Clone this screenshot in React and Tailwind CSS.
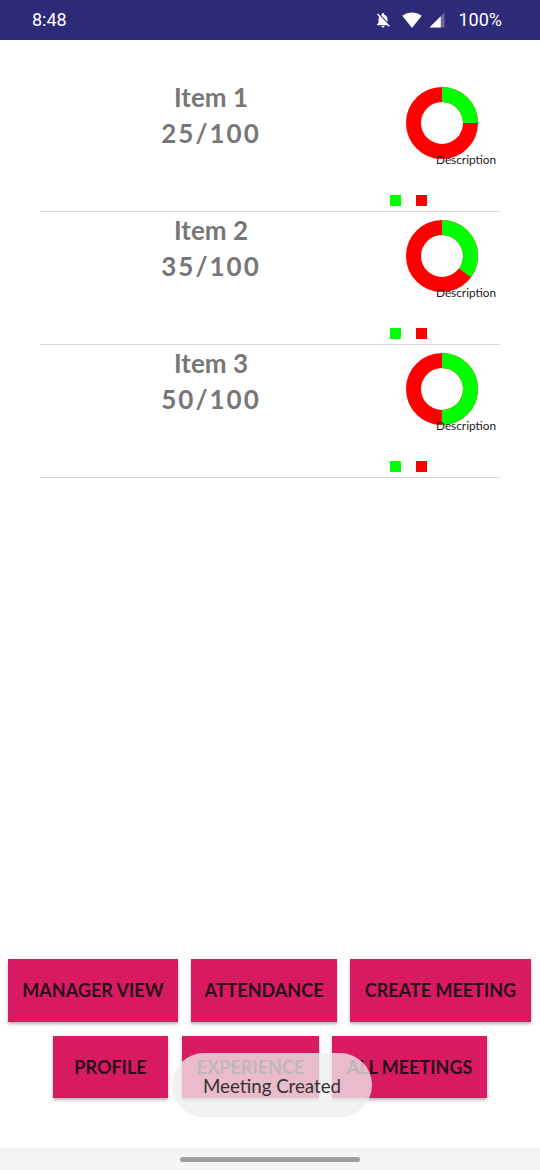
import React from 'react';

const items = [
  { name: 'Item 1', score: 25 },
  { name: 'Item 2', score: 35 },
  { name: 'Item 3', score: 50 },
];

const Donut = ({ pct }) => {
  const c = 2 * Math.PI * 28.5;
  return (
    <svg width="72" height="72" viewBox="0 0 72 72">
      <circle cx="36" cy="36" r="28.5" fill="none" stroke="#ff0000" strokeWidth="15" />
      <circle
        cx="36"
        cy="36"
        r="28.5"
        fill="none"
        stroke="#00ff00"
        strokeWidth="15"
        strokeDasharray={`${(pct / 100) * c} ${c}`}
        transform="rotate(-90 36 36)"
      />
    </svg>
  );
};

const StatusBar = () => (
  <div className="h-[40px] bg-[#2d2a78] flex items-center text-white font-['Roboto',sans-serif] shrink-0">
    <span className="ml-[32px] text-[18px] leading-none">8:48</span>
    <div className="ml-auto flex items-center mr-[38px]">
      <svg width="18" height="18" viewBox="0 0 24 24" fill="white" className="mr-[8px]">
        <path d="M20 18.69L7.84 6.14 5.27 3.49 4 4.76l2.8 2.8v.01c-.52.99-.8 2.16-.8 3.420v5l-2 2v1h13.73l2 2L21 19.72l-1-1.03zM12 22c1.11 0 2-.89 2-2h-4c0 1.11.89 2 2 2zm6-7.32V11c0-3.08-1.64-5.64-4.5-6.32V4c0-.83-.67-1.5-1.5-1.5s-1.5.67-1.5 1.5v.68c-.15.03-.29.08-.42.12-.1.03-.2.07-.3.11h-.01c-.01 0-.01 0-.02.01-.23.09-.46.2-.68.31 0 0-.01 0-.01.01L18 14.68z" />
      </svg>
      <svg width="24" height="20" viewBox="0 0 24 24" fill="white" className="mr-[4px]">
        <path d="M12.01 21.49L23.64 7c-.45-.34-4.93-4-11.64-4C5.28 3 .81 6.66.36 7l11.63 14.49.01.01.01-.01z" />
      </svg>
      <svg width="18" height="18" viewBox="0 0 24 24" className="mr-[12px]">
        <path d="M2 22h20V2z" fill="white" opacity="0.3" />
        <path d="M2 22h15V7z" fill="white" />
      </svg>
      <span className="text-[18px] leading-none">100%</span>
    </div>
  </div>
);

const Row = ({ name, score }) => (
  <div>
    <div className="flex">
      <div className="ml-[40px] w-[342px] text-center text-[#777777] font-bold text-[26px] leading-[36px] font-['Lato',sans-serif]">
        <div>{name}</div>
        <div className="tracking-[2px]">{score}/100</div>
      </div>
      <div className="ml-[24px] pt-[8px]">
        <Donut pct={score} />
        <div className="-mt-[6px] ml-[30px] text-[11.8px] leading-[14px] text-[#222] font-['Lato',sans-serif]">
          Description
        </div>
      </div>
    </div>
    <div className="flex gap-[15px] pl-[390px] mt-[28px]">
      <div className="w-[11px] h-[11px] bg-[#00ff00]" />
      <div className="w-[11px] h-[11px] bg-[#ff0000]" />
    </div>
    <div className="mx-[40px] mt-[5px] border-b border-[#dadada]" />
  </div>
);

const Btn = ({ label, w }) => (
  <div
    className={`${w} h-full bg-[#d81b60] shadow-[0_2px_3px_rgba(0,0,0,0.3)] flex items-center justify-center text-[18px] font-bold text-[#2a0d17] font-['Lato',sans-serif]`}
  >
    {label}
  </div>
);

export default function App() {
  return (
    <div className="relative h-[1170px] w-[540px] bg-white flex flex-col overflow-hidden">
      <StatusBar />
      <div className="pt-[39px]">
        {items.map((it) => (
          <Row key={it.name} name={it.name} score={it.score} />
        ))}
      </div>
      <div className="flex-1" />
      <div className="flex h-[63px] pl-[8px] gap-[13px]">
        <Btn label="MANAGER VIEW" w="w-[170px]" />
        <Btn label="ATTENDANCE" w="w-[146px]" />
        <Btn label="CREATE MEETING" w="w-[181px]" />
      </div>
      <div className="flex h-[62px] pl-[53px] mt-[14px]">
        <Btn label="PROFILE" w="w-[115px]" />
        <div className="w-[14px]" />
        <Btn label="EXPERIENCE" w="w-[137px]" />
        <div className="w-[13px]" />
        <Btn label="ALL MEETINGS" w="w-[155px]" />
      </div>
      <div className="h-[50px]" />
      <div className="h-[22px] bg-[#f5f5f5] flex justify-center pt-[9px]">
        <div className="w-[180px] h-[5px] rounded-full bg-[#a0a0a0]" />
      </div>
      <div className="absolute left-[172px] top-[1053px] w-[200px] h-[64px] rounded-full bg-[rgba(238,238,238,0.76)] flex items-center justify-center pt-[2px] text-[18.7px] text-[#333] font-['Lato',sans-serif]">
        Meeting Created
      </div>
    </div>
  );
}
